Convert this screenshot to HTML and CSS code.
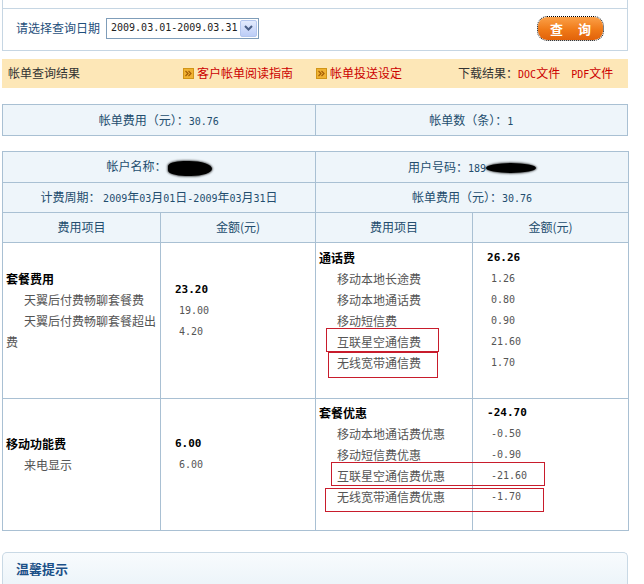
FILE: index.html
```html
<!DOCTYPE html>
<html lang="zh-CN">
<head>
<meta charset="utf-8">
<title>帐单查询</title>
<link rel="stylesheet" href="styles.css">
</head>
<body>
<div class="page">
  <div class="query-panel">
    <div class="query-top"></div>
    <div class="query-row">
      <span class="query-label">请选择查询日期</span>
      <div class="select">
        <span class="select-text num">2009.03.01-2009.03.31</span>
        <span class="select-arrow"><svg width="9" height="6" viewBox="0 0 9 6"><path d="M1 1l3.5 3.5L8 1" fill="none" stroke="#4a5f86" stroke-width="2"/></svg></span>
      </div>
      <button class="btn-query" type="button">查 询</button>
    </div>
  </div>

  <div class="result-bar">
    <span class="result-title">帐单查询结果</span>
    <a class="bar-link link-guide"><svg class="ico" width="11" height="11" viewBox="0 0 11 11"><rect x="0.5" y="0.5" width="10" height="10" fill="#f0b232" stroke="#d19516"/><path d="M2.5 3l2.5 2.5L2.5 8M5.5 3L8 5.5 5.5 8" fill="none" stroke="#a35e05" stroke-width="1.2"/></svg>客户帐单阅读指南</a>
    <a class="bar-link link-deliver"><svg class="ico" width="11" height="11" viewBox="0 0 11 11"><rect x="0.5" y="0.5" width="10" height="10" fill="#f0b232" stroke="#d19516"/><path d="M2.5 3l2.5 2.5L2.5 8M5.5 3L8 5.5 5.5 8" fill="none" stroke="#a35e05" stroke-width="1.2"/></svg>帐单投送设定</a>
    <span class="download">下载结果：<a class="dl-link"><span class="num">DOC</span>文件</a><a class="dl-link"><span class="num">PDF</span>文件</a></span>
  </div>

  <table class="summary">
    <tr>
      <td>帐单费用（元）：<span class="num">30.76</span></td>
      <td>帐单数（条）：<span class="num">1</span></td>
    </tr>
  </table>

  <div class="acct-wrap">
    <table class="acct">
      <colgroup>
        <col class="c1"><col class="c2"><col class="c3"><col class="c4">
      </colgroup>
      <tr class="r-name">
        <td colspan="2" class="head">帐户名称：<span class="blot blot-name"></span></td>
        <td colspan="2" class="head">用户号码：<span class="num">189</span><span class="blot blot-phone"></span></td>
      </tr>
      <tr class="r-period">
        <td colspan="2" class="head">计费周期： <span class="num">2009</span>年<span class="num">03</span>月<span class="num">01</span>日<span class="num">-2009</span>年<span class="num">03</span>月<span class="num">31</span>日</td>
        <td colspan="2" class="head">帐单费用（元）：<span class="num">30.76</span></td>
      </tr>
      <tr class="r-colhead">
        <td class="head">费用项目</td>
        <td class="head">金额(元)</td>
        <td class="head">费用项目</td>
        <td class="head">金额(元)</td>
      </tr>
      <tr class="r-data1">
        <td class="items">
          <div class="lines">
            <div class="cat">套餐费用</div>
            <div class="item">天翼后付费畅聊套餐费</div>
            <div class="item">天翼后付费畅聊套餐超出费</div>
          </div>
        </td>
        <td class="amounts">
          <div class="lines">
            <div class="amt-total">23.20</div>
            <div class="amt">19.00</div>
            <div class="amt">4.20</div>
          </div>
        </td>
        <td class="items">
          <div class="lines">
            <div class="cat">通话费</div>
            <div class="item">移动本地长途费</div>
            <div class="item">移动本地通话费</div>
            <div class="item">移动短信费</div>
            <div class="item">互联星空通信费</div>
            <div class="item">无线宽带通信费</div>
          </div>
        </td>
        <td class="amounts">
          <div class="lines">
            <div class="amt-total">26.26</div>
            <div class="amt">1.26</div>
            <div class="amt">0.80</div>
            <div class="amt">0.90</div>
            <div class="amt">21.60</div>
            <div class="amt">1.70</div>
          </div>
        </td>
      </tr>
      <tr class="r-data2">
        <td class="items">
          <div class="lines">
            <div class="cat">移动功能费</div>
            <div class="item">来电显示</div>
          </div>
        </td>
        <td class="amounts">
          <div class="lines">
            <div class="amt-total">6.00</div>
            <div class="amt">6.00</div>
          </div>
        </td>
        <td class="items">
          <div class="lines">
            <div class="cat">套餐优惠</div>
            <div class="item">移动本地通话费优惠</div>
            <div class="item">移动短信费优惠</div>
            <div class="item">互联星空通信费优惠</div>
            <div class="item">无线宽带通信费优惠</div>
          </div>
        </td>
        <td class="amounts">
          <div class="lines">
            <div class="amt-total">-24.70</div>
            <div class="amt">-0.50</div>
            <div class="amt">-0.90</div>
            <div class="amt">-21.60</div>
            <div class="amt">-1.70</div>
          </div>
        </td>
      </tr>
    </table>
    <div class="mark mark-1"></div>
    <div class="mark mark-2"></div>
    <div class="mark mark-3"></div>
    <div class="mark mark-4"></div>
  </div>

  <div class="tips">
    <span class="tips-title">温馨提示</span>
  </div>
</div>
</body>
</html>
```

FILE: styles.css
```css
* {
  box-sizing: border-box;
}

html, body {
  background: #ffffff;
}

body {
  margin: 0;
  font: 12px/1.4 "Noto Sans CJK SC", "Liberation Sans", sans-serif;
  color: #333333;
}

.page {
  margin-left: 2px;
  width: 626px;
}

.num {
  font-family: "DejaVu Sans Mono", "Liberation Mono", monospace;
  font-size: 10px;
}

/* ---------- query panel ---------- */
.query-panel {
  height: 51px;
  border: 1px solid #c6d6e3;
  border-top: none;
}

.query-top {
  height: 9px;
  border-bottom: 1px solid #c6d6e3;
}

.query-row {
  display: flex;
  align-items: center;
  height: 40px;
  padding: 0 24px 2px 13px;
}

.query-label {
  color: #1f4f7c;
  font-size: 12px;
}

.select {
  display: flex;
  align-items: center;
  margin-left: 6px;
  width: 153px;
  height: 21px;
  border: 1px solid #7f9db9;
  background: #ffffff;
  padding: 1px;
}

.select-text {
  flex: 1;
  padding-left: 3px;
  color: #222222;
  font-size: 10px;
}

.select-arrow {
  width: 17px;
  height: 17px;
  display: flex;
  align-items: center;
  justify-content: center;
  background: linear-gradient(#e3ebfd, #bccdf7);
  border: 1px solid #b3c6ee;
  border-radius: 2px;
}

.btn-query {
  margin-left: auto;
  width: 65px;
  height: 23px;
  border: none;
  border-radius: 9px;
  background: linear-gradient(#fba048, #f07a18 55%, #e1620a);
  color: #ffffff;
  font: bold 13px/23px "Noto Sans CJK SC", sans-serif;
  letter-spacing: 6px;
  padding: 0 0 0 6px;
  outline: 1px dotted #000000;
  outline-offset: 0;
}

/* ---------- result bar ---------- */
.result-bar {
  display: flex;
  align-items: center;
  margin-top: 8px;
  height: 29px;
  background: #fde7b7;
  padding-left: 6px;
  white-space: nowrap;
}

.result-title {
  color: #333333;
}

.bar-link {
  display: flex;
  align-items: center;
  color: #cc0000;
  text-decoration: none;
}

.ico {
  margin-right: 3px;
  flex: none;
}

.link-guide {
  margin-left: 103px;
}

.link-deliver {
  margin-left: 23px;
}

.download {
  margin-left: 56px;
  color: #333333;
}

.dl-link {
  color: #cc0000;
  text-decoration: none;
  margin-right: 11px;
}

/* ---------- summary ---------- */
.summary {
  margin-top: 16px;
  width: 626px;
  border-collapse: collapse;
  table-layout: fixed;
}

.summary td {
  box-sizing: content-box;
  height: 30px;
  padding: 0;
  border: 1px solid #a9c0d3;
  background: #eef5fa;
  text-align: center;
  vertical-align: middle;
  color: #234d6e;
}

/* ---------- account table ---------- */
.acct-wrap {
  position: relative;
  margin-top: 15px;
}

.acct {
  width: 626px;
  border-collapse: collapse;
  table-layout: fixed;
}

.acct .c1 { width: 158px; }
.acct .c2 { width: 155px; }
.acct .c3 { width: 157px; }
.acct .c4 { width: 156px; }

.acct td {
  box-sizing: content-box;
  padding: 0;
  border: 1px solid #a9c0d3;
  vertical-align: middle;
}

.acct td.head {
  background: #eef5fa;
  text-align: center;
  color: #234d6e;
}

.r-name td { height: 30px; }
.r-period td { height: 29px; }
.r-colhead td { height: 29px; }
.r-data1 td { height: 155px; }
.r-data2 td { height: 131px; }

.acct td.items {
  padding-left: 3px;
  padding-right: 2px;
}

.acct td.amounts {
  padding-left: 14px;
}

.lines {
  line-height: 21px;
  padding-bottom: 21px;
}

.cat {
  font-weight: bold;
  color: #000000;
}

.item {
  text-indent: 18px;
  color: #555555;
}

.amt-total {
  font-family: "DejaVu Sans Mono", "Liberation Mono", monospace;
  font-size: 11px;
  font-weight: bold;
  color: #000000;
}

.amt {
  font-family: "DejaVu Sans Mono", "Liberation Mono", monospace;
  font-size: 10px;
  color: #555555;
  padding-left: 4px;
}

.blot {
  display: inline-block;
  vertical-align: middle;
  background: #000000;
  border-radius: 50%;
  box-shadow: 0 0 2px 1px rgba(0, 0, 0, 0.55);
}

.blot-name {
  width: 44px;
  height: 15px;
  margin-left: 1px;
  border-radius: 40% 60% 55% 45%;
}

.blot-phone {
  width: 50px;
  height: 10px;
}

/* annotation rectangles drawn over the table */
.mark {
  position: absolute;
  border: 1.5px solid #c81c2c;
  pointer-events: none;
}

.mark-1 { left: 324px; top: 177px; width: 113px; height: 24px; }
.mark-2 { left: 326px; top: 201px; width: 110px; height: 26px; }
.mark-3 { left: 329px; top: 311px; width: 214px; height: 24px; }
.mark-4 { left: 323px; top: 337px; width: 219px; height: 24px; }

/* ---------- tips ---------- */
.tips {
  margin-top: 21px;
  height: 40px;
  border: 1px solid #c9d9e5;
  border-bottom: none;
  border-radius: 5px 5px 0 0;
  background: linear-gradient(#f8fbfd, #eaf3f9);
  padding: 1px 0 0 13px;
}

.tips-title {
  font-weight: bold;
  font-size: 13px;
  line-height: 29px;
  color: #1b5088;
}
```
